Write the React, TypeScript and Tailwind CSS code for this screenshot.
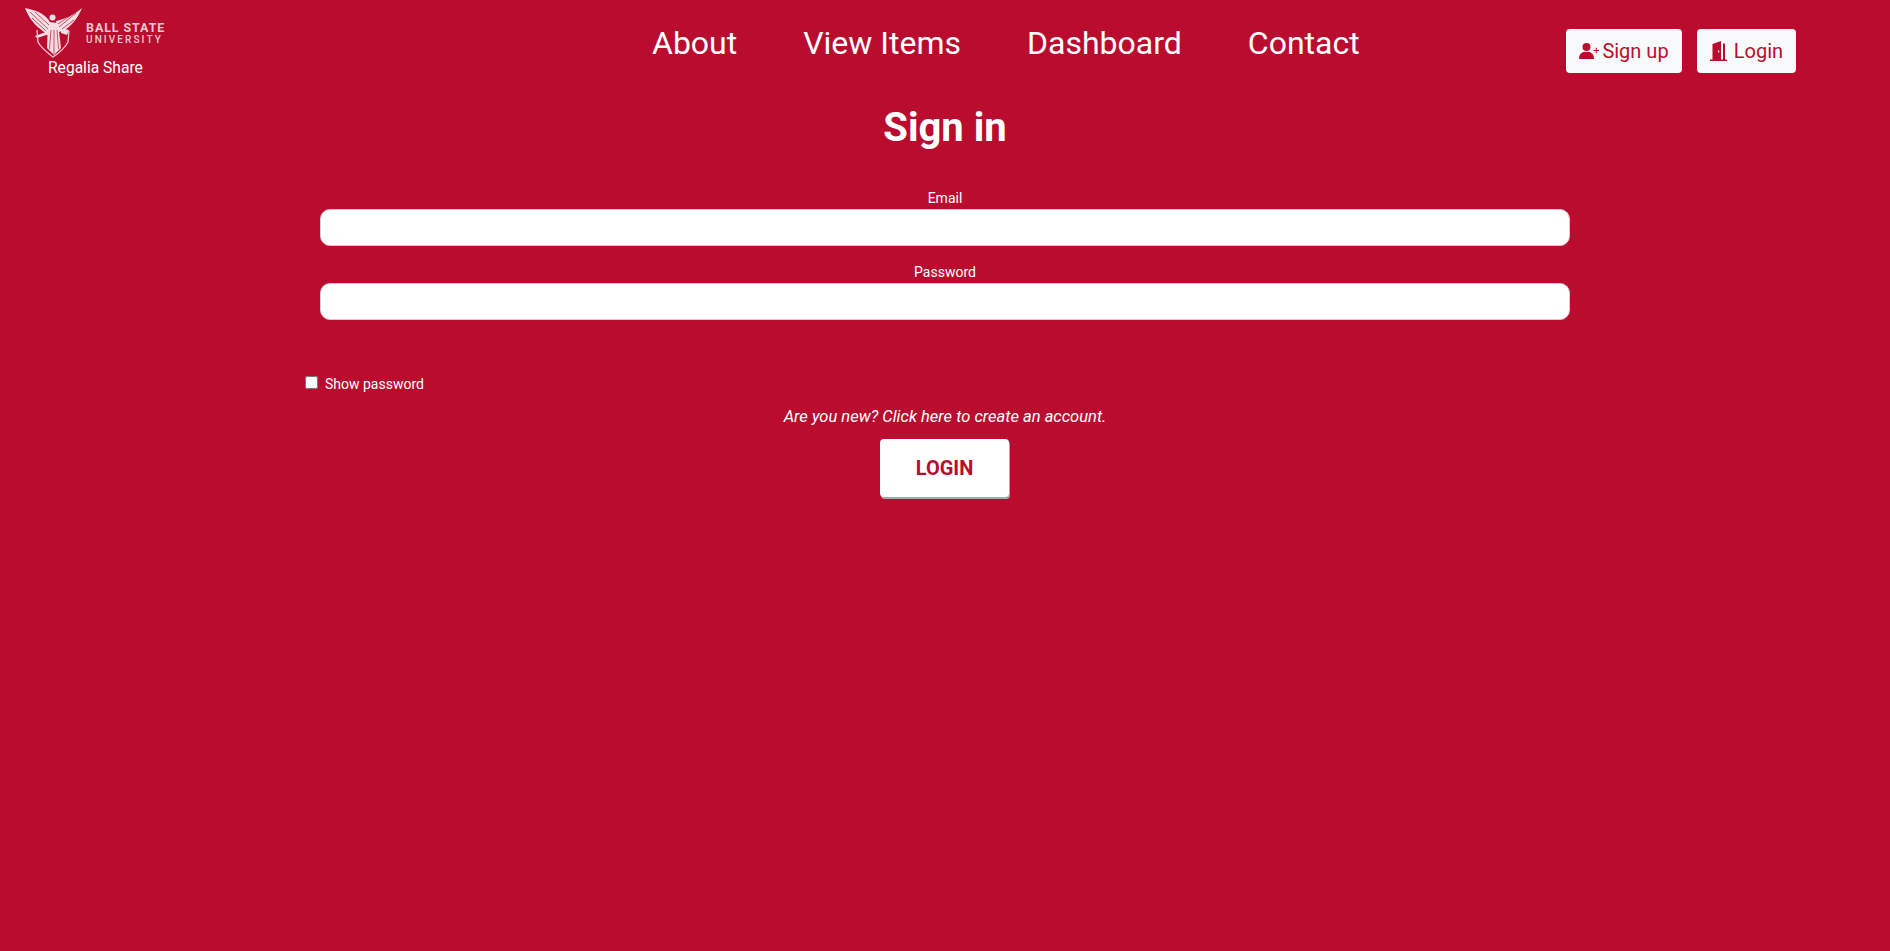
import React from "react";

const navLinks = ["About", "View Items", "Dashboard", "Contact"];

const Logo = () => (
  <div className="w-[165px] h-[59px] flex items-start overflow-hidden">
    <svg width="60" height="58" viewBox="0 0 60 58" className="ml-[24px] shrink-0">
      <g fill="#f6dfe3">
        {/* wings */}
        <path d="M1 8 C10 10 20 12 26 22 L25 36 C21 33 18 30 15 28 C9 23 4 16 1 8 Z" />
        <path d="M58 8 C55 15 50 24 42 29 C39 31 36 32 34 32 L32 21 C41 19 50 15 58 8 Z" />
        {/* figure */}
        <circle cx="28.5" cy="17.5" r="3" />
        <path d="M24 22 L34 23 L37 48 L30 55 L23 48 Z" />
        <path d="M11 36 L36 27 L38 30 L13 38 Z" />
        <path d="M37 28 L45 30 L43 35 L37 33 Z" />
      </g>
      <path
        d="M13 30 L14 42 C17 48 24 53 29 57 C35 53 41 48 44 42 L45 31"
        fill="none"
        stroke="#f0c6ce"
        strokeWidth="1.3"
      />
      <g stroke="#ba0c2f" strokeWidth="0.7" fill="none">
        <path d="M27 30 L25.5 49" />
        <path d="M30 30 L30 54" />
        <path d="M33 30 L34.5 49" />
        <path d="M6 12 L24 29" />
        <path d="M11 12 L25 25" />
        <path d="M8 18 L22 31" />
        <path d="M52 13 L35 27" />
        <path d="M47 15 L34 24" />
        <path d="M50 20 L38 29" />
      </g>
    </svg>
    <div className="ml-[2px] mt-[21px] shrink-0 text-[#f0c6ce] font-['Roboto',sans-serif]">
      <div className="text-[12.5px] leading-[13px] font-bold tracking-[0.9px] whitespace-nowrap">BALL STATE</div>
      <div className="text-[10px] leading-[12px] font-medium tracking-[2.1px] whitespace-nowrap">UNIVERSITY</div>
    </div>
  </div>
);

const SignUpIcon = () => (
  <svg width="20" height="16" viewBox="0 0 20 16" fill="currentColor" className="shrink-0">
    <circle cx="7.5" cy="4" r="4" />
    <path d="M0 16 C0 11 3 9 5 9 L10 9 C12 9 15 11 15 16 Z" />
    <path d="M14.5 7 H20 V8 H14.5 Z M16.7 4.8 H17.8 V10.2 H16.7 Z" />
  </svg>
);

const DoorIcon = () => (
  <svg width="17" height="20" viewBox="0 0 17 20" fill="currentColor" className="shrink-0">
    <path d="M0 18.5 H2.5 V3 L11 0 V18.5 H13 V2.5 H15 V18.5 H17 V20 H0 Z M8 9.5 V11.5 H9.2 V9.5 Z" fillRule="evenodd" />
  </svg>
);

export default function App() {
  return (
    <div className="min-h-[951px] bg-[#ba0c2f] text-white font-['Roboto',sans-serif]">
      {/* Header */}
      <header className="flex h-[85px] items-start">
        <div className="w-[190px] flex flex-col">
          <Logo />
          <span className="ml-[48px] text-[15.6px] leading-[20px] -mt-[1px]">Regalia Share</span>
        </div>
        <nav className="ml-[462px] mt-[23px] flex gap-[66px] text-[32px] leading-[40px]">
          {navLinks.map((link) => (
            <a key={link} href="#">
              {link}
            </a>
          ))}
        </nav>
        <div className="ml-auto mr-[94px] mt-[29px] flex gap-[15px] text-[20px] text-[#ba0c2f]">
          <button className="h-[44px] w-[116px] rounded bg-[#f8f9fa] flex items-center justify-center gap-[3px]">
            <SignUpIcon />
            Sign up
          </button>
          <button className="h-[44px] w-[99px] rounded bg-[#f8f9fa] flex items-center justify-center gap-[7px]">
            <DoorIcon />
            Login
          </button>
        </div>
      </header>

      {/* Sign in form */}
      <main className="w-[1280px] ml-[305px]">
        <h1 className="text-center text-[40px] leading-[48px] font-bold mt-[19px]">Sign in</h1>
        <form className="mt-[38px]">
          <div className="px-[15px]">
            <label className="block text-center text-[14px] leading-[16px] mb-[3px]">Email</label>
            <input type="text" className="block w-[1250px] h-[37px] rounded-[10px] bg-white border border-[#cfcfcf]" />
            <label className="block text-center text-[14px] leading-[16px] mt-[18px] mb-[3px]">Password</label>
            <input type="password" className="block w-[1250px] h-[37px] rounded-[10px] bg-white border border-[#cfcfcf]" />
          </div>
          <div className="flex items-start mt-[52px] h-[20px]">
            <input type="checkbox" className="w-[13px] h-[13px] m-0 mt-[4px]" />
            <span className="ml-[7px] mt-[2px] text-[14px] leading-[20px]">Show password</span>
          </div>
          <p className="text-center italic text-[16.5px] leading-[24px] mt-[13px]">Are you new? Click here to create an account.</p>
          <div className="flex justify-center mt-[10px]">
            <button
              type="button"
              className="w-[129px] h-[58px] mr-[1px] rounded bg-white text-[#ba0c2f] text-[20px] font-bold shadow-[1px_2px_0_#a8a8a8]"
            >
              LOGIN
            </button>
          </div>
        </form>
      </main>
    </div>
  );
}
